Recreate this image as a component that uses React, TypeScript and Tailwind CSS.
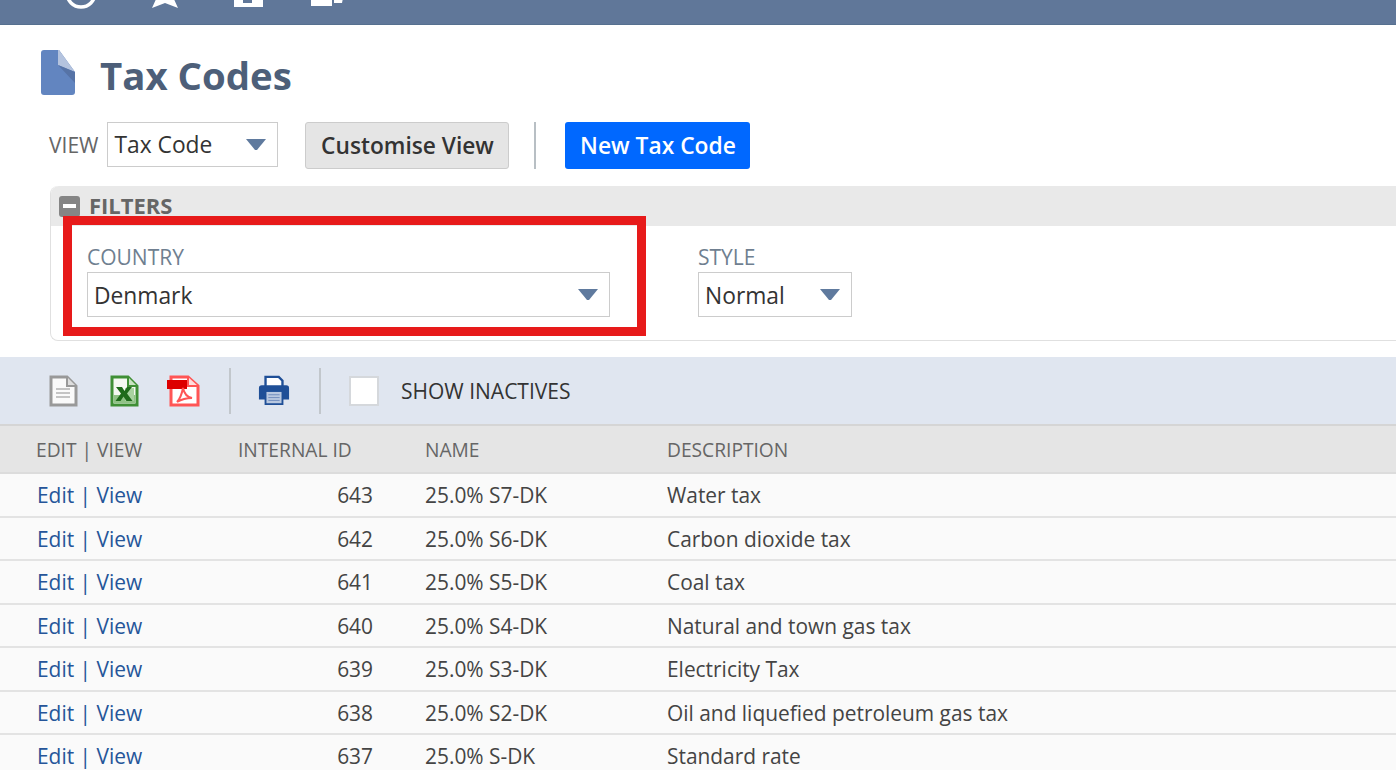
const ROWS = [
  { id: 643, name: "25.0% S7-DK", description: "Water tax" },
  { id: 642, name: "25.0% S6-DK", description: "Carbon dioxide tax" },
  { id: 641, name: "25.0% S5-DK", description: "Coal tax" },
  { id: 640, name: "25.0% S4-DK", description: "Natural and town gas tax" },
  { id: 639, name: "25.0% S3-DK", description: "Electricity Tax" },
  { id: 638, name: "25.0% S2-DK", description: "Oil and liquefied petroleum gas tax" },
  { id: 637, name: "25.0% S-DK", description: "Standard rate" },
];

function Caret() {
  return (
    <svg width="22" height="13" viewBox="0 0 22 13" className="shrink-0">
      <path d="M1 1h20L12 12h-2z" fill="#5f7a9e" />
    </svg>
  );
}

function Select({ value, className, textClass }: { value: string; className: string; textClass: string }) {
  return (
    <div className={`flex items-center justify-between border border-[#cccccc] bg-white pl-[6px] pr-[10px] text-[22.8px] text-[#333333] ${className}`}>
      <span className={textClass}>{value}</span>
      <Caret />
    </div>
  );
}

function TopBar() {
  return (
    <header className="flex h-[25px] items-end overflow-hidden border-b border-[#56708f] bg-[#607799] text-white">
      <svg width="360" height="24" viewBox="0 0 360 24" className="shrink-0" fill="white">
        <circle cx="81" cy="-7" r="14" fill="none" stroke="white" strokeWidth="3.5" />
        <path d="M157-3h16l5 11-13-5-13 5z" />
        <path d="M234-2h29v9h-29z" />
        <rect x="243" y="-2" width="9" height="5" fill="#607799" />
        <path d="M311-2h21v8h-21z" />
        <path d="M334-2h9l-1 5h-8z" />
      </svg>
      <span className="ml-[197px] translate-y-[20px] text-[28px] font-semibold leading-none">y</span>
      <span className="ml-[435px] translate-y-[20px] text-[28px] font-semibold leading-none">p</span>
      <span className="ml-[141px] translate-y-[20px] text-[28px] font-semibold leading-none">y</span>
    </header>
  );
}

function PageTitle() {
  return (
    <div className="flex h-[97px] items-start pl-[41px] pt-[25px]">
      <svg width="35" height="45" viewBox="0 0 35 45">
        <path d="M3 0h15l16 22v20a3 3 0 0 1-3 3H3a3 3 0 0 1-3-3V3a3 3 0 0 1 3-3z" fill="#6285c0" />
        <path d="M17 0h1l16 22-17-7z" fill="#b4c3de" />
        <path d="M17 15l17 7v11z" fill="#5673a6" />
      </svg>
      <h1 className="ml-[24px] mt-[3px] text-[38.4px] font-bold leading-[44px] text-[#4d5f79]">Tax Codes</h1>
    </div>
  );
}

function ViewRow() {
  return (
    <div className="flex h-[47px] items-center pl-[49px]">
      <span className="text-[21px] text-[#666666]">VIEW</span>
      <Select value="Tax Code" textClass="translate-y-[1px]" className="ml-[9px] h-[45px] w-[171px] -translate-y-[1px]" />
      <button className="ml-[27px] h-[47px] w-[204px] rounded-[3px] border border-[#cccccc] bg-[#e5e5e5] pt-[1px] text-[22.7px] font-semibold text-[#333333]">
        Customise View
      </button>
      <div className="ml-[25px] h-[47px] w-[2px] bg-[#b8bfc4]" />
      <button className="ml-[29px] h-[47px] w-[185px] rounded-[3px] bg-[#0068ff] pt-[1px] text-[22.8px] font-semibold text-white">
        New Tax Code
      </button>
    </div>
  );
}

function Filters() {
  return (
    <section className="ml-[50px] mt-[17px] h-[155px] rounded-l-[8px] border-b border-l border-[#e0e0e0]">
      <div className="flex h-[40px] items-center rounded-tl-[8px] bg-[#e9e9e9] pl-[8px]">
        <span className="flex h-[21px] w-[21px] items-center justify-center rounded-[3px] bg-[#858585]">
          <span className="h-[4px] w-[13px] bg-white" />
        </span>
        <span className="ml-[9px] -translate-y-[1px] text-[22px] font-bold text-[#666666]">FILTERS</span>
      </div>
      <div className="flex pl-[36px] pt-[17px]">
        <div>
          <div className="h-[29px] text-[21px] leading-[29px] text-[#6f7f90]">COUNTRY</div>
          <Select value="Denmark" textClass="translate-y-[2px]" className="h-[45px] w-[523px]" />
        </div>
        <div className="ml-[88px]">
          <div className="h-[29px] text-[21px] leading-[29px] text-[#6f7f90]">STYLE</div>
          <Select value="Normal" textClass="translate-y-[2px]" className="h-[45px] w-[154px]" />
        </div>
      </div>
    </section>
  );
}

function Toolbar() {
  return (
    <div className="mt-[16px] flex h-[69px] items-center border-b-2 border-[#d5d5d5] bg-[#e0e6f0] pl-[49px]">
      <svg width="29" height="32" viewBox="0 0 29 32">
        <path d="M2 2h16l9 9v19H2z" fill="#fafafa" stroke="#999999" strokeWidth="3" />
        <path d="M18 2v9h9" fill="#dddddd" stroke="#999999" strokeWidth="2" />
        <path d="M7 14h14M7 18h14M7 22h14" stroke="#c4c4c4" strokeWidth="2" />
      </svg>
      <svg width="29" height="32" viewBox="0 0 29 32" className="ml-[32px]">
        <path d="M2 2h16l9 9v19H2z" fill="#f4f8f1" stroke="#3f8f35" strokeWidth="3" />
        <path d="M18 2v9h9" fill="#c9e3c2" stroke="#3f8f35" strokeWidth="2" />
        <path d="M4 20h21v8H4z" fill="#8fc285" />
        <path d="M15 13h9v13h-9z" fill="#a9d2a0" />
        <path d="M6 12h6l2.500 4 2.500-4h5l-5 6.500 5.500 7.500h-6l-3-4.500-3 4.500h-5l5.500-7.500z" fill="#1f6b1a" />
      </svg>
      <svg width="34" height="32" viewBox="0 0 34 32" className="ml-[28px]">
        <path d="M4 2h17l10 9v19H4z" fill="#ffffff" stroke="#ff5555" strokeWidth="3" />
        <path d="M21 2v9h10" fill="#ffdddd" stroke="#ff5555" strokeWidth="2" />
        <rect x="0" y="5" width="20" height="9" fill="#dd0000" />
        <path d="M10 27c3-3 5-9 6-14 1 5 4 9 9 10-5 0-10 1-15 4z" fill="none" stroke="#ff5555" strokeWidth="2" />
      </svg>
      <div className="ml-[28px] h-[46px] w-[2px] bg-[#c2c7cc]" />
      <svg width="32" height="32" viewBox="0 0 34 32" className="ml-[27px]">
        <path d="M8 1h14l4 4v8H8z" fill="#ffffff" stroke="#1f4f97" strokeWidth="2.5" />
        <path d="M4 10h26a3 3 0 0 1 3 3v12h-6v6H7v-6H1V13a3 3 0 0 1 3-3z" fill="#1f4f97" />
        <rect x="9" y="17" width="16" height="12" fill="#b9c8e0" />
        <path d="M11 20h12M11 23h12M11 26h12" stroke="#6d8abb" strokeWidth="1" />
      </svg>
      <div className="ml-[29px] h-[46px] w-[2px] bg-[#c2c7cc]" />
      <span className="ml-[28px] h-[30px] w-[30px] border-2 border-[#d5d8dc] bg-white" />
      <span className="ml-[22px] translate-y-[1px] text-[21px] text-[#333333]">SHOW INACTIVES</span>
    </div>
  );
}

function Table() {
  return (
    <table className="w-full border-collapse text-[20.9px]">
      <thead>
        <tr className="h-[47px] border-b-2 border-[#dcdcdc] bg-[#e5e5e5] text-left text-[19.2px] text-[#666666]">
          <th className="w-[185px] pl-[36px] pt-[2px] font-normal">EDIT | VIEW</th>
          <th className="w-[188px] pl-[53px] pt-[2px] font-normal whitespace-nowrap">INTERNAL ID</th>
          <th className="w-[294px] pl-[52px] pt-[2px] font-normal">NAME</th>
          <th className="pt-[2px] font-normal">DESCRIPTION</th>
        </tr>
      </thead>
      <tbody>
        {ROWS.map((row) => (
          <tr key={row.id} className="h-[43.5px] border-b-2 border-[#e3e3e3] bg-[#fafafa] text-[#444444]">
            <td className="pl-[37px] pt-[2px] text-[#255599]">Edit | View</td>
            <td className="pt-[2px] text-right">{row.id}</td>
            <td className="pl-[52px] pt-[2px]">{row.name}</td>
            <td className="pt-[2px]">{row.description}</td>
          </tr>
        ))}
      </tbody>
    </table>
  );
}

export default function App() {
  return (
    <div className="relative h-[770px] w-[1396px] overflow-hidden bg-white font-['Open_Sans',sans-serif]">
      <TopBar />
      <PageTitle />
      <ViewRow />
      <Filters />
      <Toolbar />
      <Table />
      {/* red annotation drawn over the screenshot */}
      <div className="absolute left-[63px] top-[216px] h-[120px] w-[583px] border-[9px] border-[#e71a1a]" />
    </div>
  );
}
